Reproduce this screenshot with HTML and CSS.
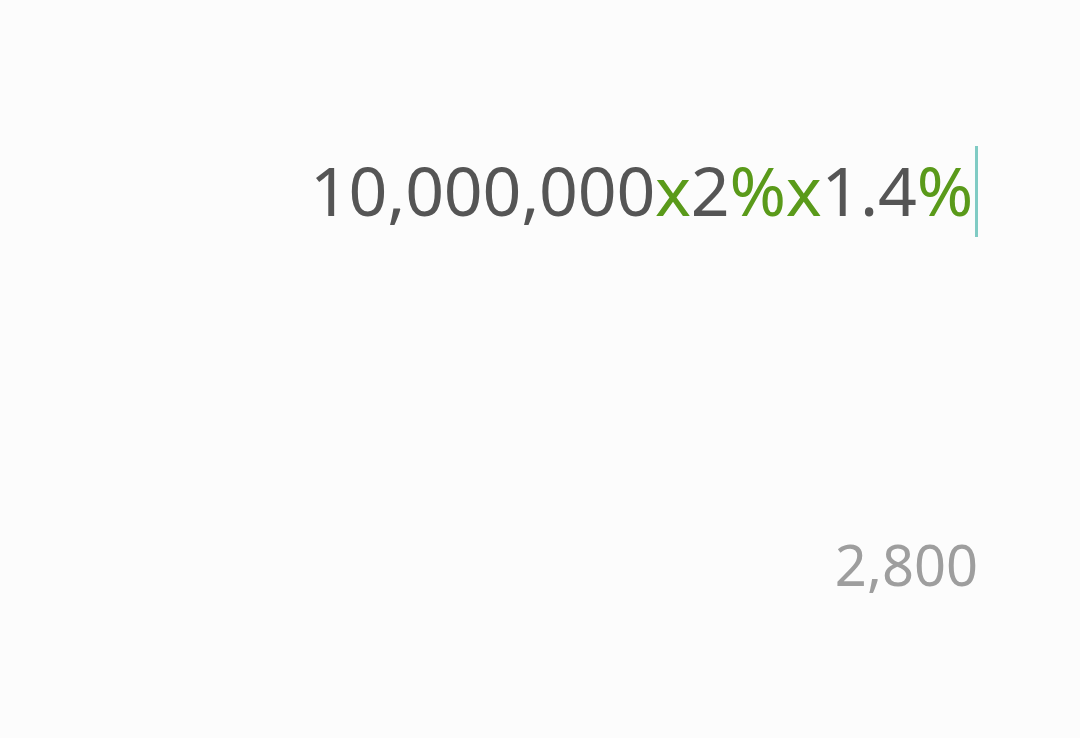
FILE: index.html
```html
<!doctype html>
<html lang="en">
  <head>
    <meta charset="UTF-8" />
    <meta name="viewport" content="width=device-width, initial-scale=1.0" />
    <title>Calculator</title>
    <link rel="stylesheet" href="styles.css">
  </head>
  <body>
    <div class="display">
      <!-- Expression -->
      <div class="expression">
        <span>10,000,000</span><span class="op">x</span><span>2</span><span class="op">%</span><span class="op">x</span><span>1.4</span><span class="op">%</span><span class="caret"></span>
      </div>

      <!-- Result preview -->
      <div class="result">2,800</div>
    </div>
  </body>
</html>
```

FILE: styles.css
```css
html,
body {
  margin: 0;
  height: 100%;
  background: #fcfcfc;
}

.display {
  display: flex;
  flex-direction: column;
  align-items: flex-end;
  padding: 146px 102px 0 0;
  font-family: "Noto Sans", sans-serif;
}

.expression {
  display: flex;
  align-items: center;
  height: 91px;
  padding-bottom: 4px;
  box-sizing: border-box;
  font-size: 68px;
  color: #555555;
  letter-spacing: -0.25px;
}

.op {
  color: #5a9a1a;
}

.caret {
  align-self: flex-start;
  width: 3px;
  height: 91px;
  margin-left: 2px;
  background: #80cbc4;
}

.result {
  margin-top: 292px;
  font-size: 56px;
  line-height: 70px;
  color: #9e9e9e;
}
```
